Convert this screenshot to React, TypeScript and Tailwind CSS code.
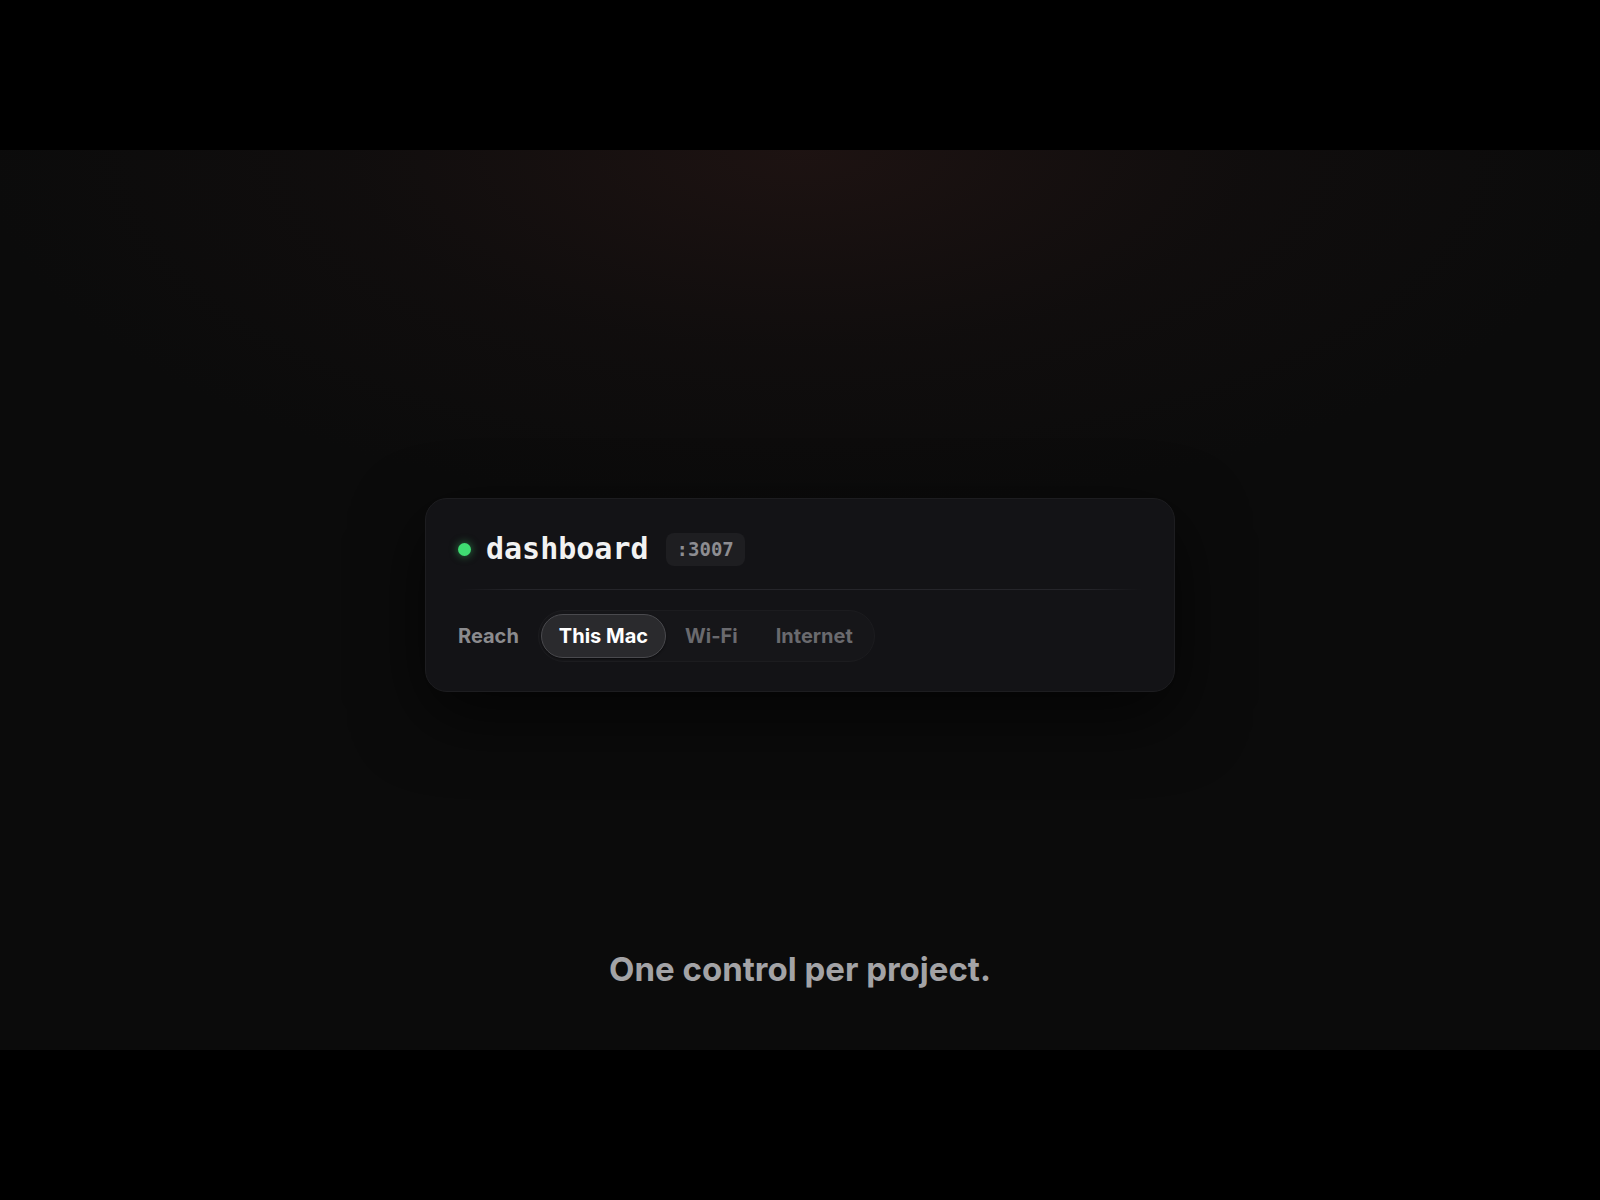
import React from "react";

const reachOptions = ["This Mac", "Wi-Fi", "Internet"];

function ReachControl({ active }: { active: string }) {
  return (
    <div className="flex items-center gap-[19px]">
      <span className="text-[20px] font-bold text-[#8b8b8e] [font-family:Inter,'Liberation_Sans',sans-serif]">
        Reach
      </span>
      <div className="flex h-[52px] items-center rounded-full bg-[#161619] px-[2px] border border-[#1c1c1f]">
        {reachOptions.map((opt) =>
          opt === active ? (
            <div
              key={opt}
              className="flex h-[44px] items-center rounded-full border border-[#4a4a4e] bg-[#2a2a2d] px-[17px] text-[20px] font-bold text-white [font-family:Inter,'Liberation_Sans',sans-serif] shadow-[0_1px_2px_rgba(0,0,0,0.5)]"
            >
              {opt}
            </div>
          ) : (
            <div
              key={opt}
              className="flex h-[44px] items-center px-[19px] text-[20px] font-bold text-[#6a6a6e] [font-family:Inter,'Liberation_Sans',sans-serif]"
            >
              {opt}
            </div>
          )
        )}
      </div>
    </div>
  );
}

function ProjectCard() {
  return (
    <div className="w-[750px] rounded-[22px] border border-[#1d1d20] bg-[#131316] px-[32px] pt-[33px] pb-[29px] shadow-[0_24px_70px_rgba(0,0,0,0.65)]">
      <div className="flex h-[34px] items-center">
        <span className="h-[13px] w-[13px] rounded-full bg-[#3fdc72] shadow-[0_0_8px_rgba(63,220,114,0.55)]" />
        <span className="ml-[15px] text-[30px] font-bold leading-none text-[#f2f2f2] [font-family:'DejaVu_Sans_Mono','Liberation_Mono',monospace]">
          dashboard
        </span>
        <span className="ml-[17px] flex h-[33px] items-center rounded-[8px] bg-[#1e1e21] px-[11px] text-[19px] font-bold text-[#8d8d91] [font-family:'DejaVu_Sans_Mono','Liberation_Mono',monospace]">
          :3007
        </span>
      </div>
      <div className="mt-[23px] h-px bg-[linear-gradient(90deg,transparent,#25252a_8%,#25252a_92%,transparent)]" />
      <div className="mt-[20px]">
        <ReachControl active="This Mac" />
      </div>
    </div>
  );
}

export default function App() {
  return (
    <div className="flex h-[1200px] w-[1600px] flex-col bg-black">
      <div className="h-[150px] bg-black" />
      <main className="flex h-[900px] flex-col items-center bg-[#0b0b0b] bg-[radial-gradient(ellipse_820px_360px_at_50%_0%,rgba(30,19,18,0.95),rgba(20,15,15,0.55)_55%,transparent_100%)] pt-[348px]">
        <ProjectCard />
        <p className="mt-[257px] text-[33px] font-bold leading-[40px] text-[#a3a3a6] [font-family:Inter,'Liberation_Sans',sans-serif]">
          One control per project.
        </p>
      </main>
      <div className="h-[150px] bg-black" />
    </div>
  );
}
